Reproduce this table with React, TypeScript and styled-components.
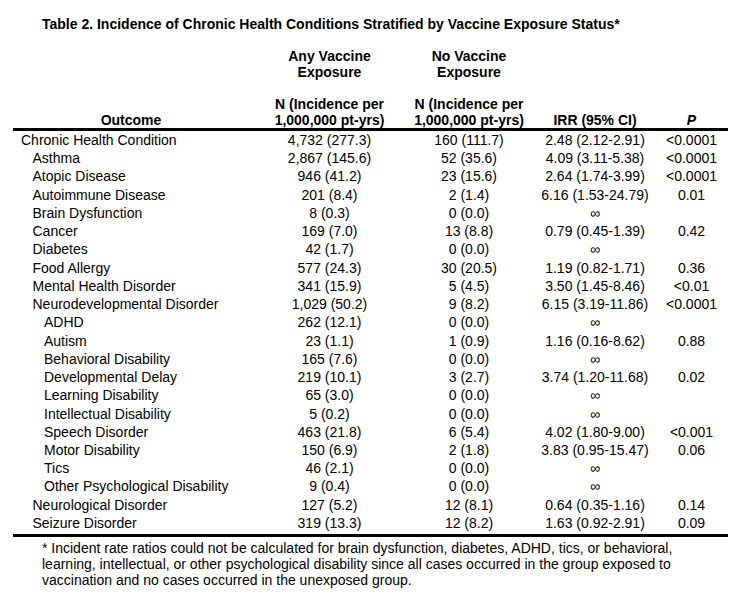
import React from "react";
import styled, { createGlobalStyle } from "styled-components";

const Global = createGlobalStyle`
  html, body { margin: 0; padding: 0; background: #fff; }
  body { font-family: "Liberation Sans", Arial, sans-serif; color: #000; }
`;

const Page = styled.div`
  width: 742px;
  padding: 16px 0 0 13px;
  box-sizing: border-box;
`;

const Title = styled.div`
  padding-left: 29px;
  font-size: 14px;
  font-weight: 700;
  line-height: 16px;
  margin-bottom: 16px;
`;

const Grid = styled.div`
  display: grid;
  grid-template-columns: 243px 154px 125px 127px 66px;
  width: 715px;
`;

const HeadGrid = styled(Grid)`
  border-bottom: 3px solid #000;
`;

const HeadCell = styled.div<{ $italic?: boolean }>`
  align-self: end;
  text-align: center;
  padding-right: 7px;
  font-size: 14px;
  font-weight: 700;
  line-height: 16px;
  font-style: ${(p) => (p.$italic ? "italic" : "normal")};
`;

const Spacer = styled.div`
  height: 16px;
`;

const BodyGrid = styled(Grid)`
  grid-auto-rows: 18.24px;
  padding-bottom: 2px;
  border-bottom: 3px solid #000;
`;

const OutcomeCell = styled.div<{ $level: number }>`
  padding-left: ${(p) => 8 + p.$level * 11.5}px;
  font-size: 14px;
  line-height: 18.6px;
  white-space: nowrap;
`;

const NumCell = styled.div`
  text-align: center;
  padding-right: 7px;
  font-size: 14px;
  line-height: 18.6px;
  white-space: nowrap;
`;

const Footnote = styled.div`
  padding: 3px 0 0 29px;
  font-size: 14px;
  line-height: 16px;
`;

type Row = [number, string, string, string, string, string];

const rows: Row[] = [
  [0, "Chronic Health Condition", "4,732 (277.3)", "160 (111.7)", "2.48 (2.12-2.91)", "<0.0001"],
  [1, "Asthma", "2,867 (145.6)", "52 (35.6)", "4.09 (3.11-5.38)", "<0.0001"],
  [1, "Atopic Disease", "946 (41.2)", "23 (15.6)", "2.64 (1.74-3.99)", "<0.0001"],
  [1, "Autoimmune Disease", "201 (8.4)", "2 (1.4)", "6.16 (1.53-24.79)", "0.01"],
  [1, "Brain Dysfunction", "8 (0.3)", "0 (0.0)", "∞", ""],
  [1, "Cancer", "169 (7.0)", "13 (8.8)", "0.79 (0.45-1.39)", "0.42"],
  [1, "Diabetes", "42 (1.7)", "0 (0.0)", "∞", ""],
  [1, "Food Allergy", "577 (24.3)", "30 (20.5)", "1.19 (0.82-1.71)", "0.36"],
  [1, "Mental Health Disorder", "341 (15.9)", "5 (4.5)", "3.50 (1.45-8.46)", "<0.01"],
  [1, "Neurodevelopmental Disorder", "1,029 (50.2)", "9 (8.2)", "6.15 (3.19-11.86)", "<0.0001"],
  [2, "ADHD", "262 (12.1)", "0 (0.0)", "∞", ""],
  [2, "Autism", "23 (1.1)", "1 (0.9)", "1.16 (0.16-8.62)", "0.88"],
  [2, "Behavioral Disability", "165 (7.6)", "0 (0.0)", "∞", ""],
  [2, "Developmental Delay", "219 (10.1)", "3 (2.7)", "3.74 (1.20-11.68)", "0.02"],
  [2, "Learning Disability", "65 (3.0)", "0 (0.0)", "∞", ""],
  [2, "Intellectual Disability", "5 (0.2)", "0 (0.0)", "∞", ""],
  [2, "Speech Disorder", "463 (21.8)", "6 (5.4)", "4.02 (1.80-9.00)", "<0.001"],
  [2, "Motor Disability", "150 (6.9)", "2 (1.8)", "3.83 (0.95-15.47)", "0.06"],
  [2, "Tics", "46 (2.1)", "0 (0.0)", "∞", ""],
  [2, "Other Psychological Disability", "9 (0.4)", "0 (0.0)", "∞", ""],
  [1, "Neurological Disorder", "127 (5.2)", "12 (8.1)", "0.64 (0.35-1.16)", "0.14"],
  [1, "Seizure Disorder", "319 (13.3)", "12 (8.2)", "1.63 (0.92-2.91)", "0.09"],
];

export default function App() {
  return (
    <Page>
      <Global />
      <Title>
        Table 2. Incidence of Chronic Health Conditions Stratified by Vaccine Exposure Status*
      </Title>
      <HeadGrid>
        <HeadCell>Outcome</HeadCell>
        <HeadCell>
          Any Vaccine
          <br />
          Exposure
          <Spacer />
          N (Incidence per
          <br />
          1,000,000 pt-yrs)
        </HeadCell>
        <HeadCell>
          No Vaccine
          <br />
          Exposure
          <Spacer />
          N (Incidence per
          <br />
          1,000,000 pt-yrs)
        </HeadCell>
        <HeadCell>IRR (95% CI)</HeadCell>
        <HeadCell $italic>P</HeadCell>
      </HeadGrid>
      <BodyGrid>
        {rows.map(([level, name, any, none, irr, p]) => (
          <React.Fragment key={name}>
            <OutcomeCell $level={level}>{name}</OutcomeCell>
            <NumCell>{any}</NumCell>
            <NumCell>{none}</NumCell>
            <NumCell>{irr}</NumCell>
            <NumCell>{p}</NumCell>
          </React.Fragment>
        ))}
      </BodyGrid>
      <Footnote>
        * Incident rate ratios could not be calculated for brain dysfunction, diabetes, ADHD, tics, or behavioral,
        <br />
        learning, intellectual, or other psychological disability since all cases occurred in the group exposed to
        <br />
        vaccination and no cases occurred in the unexposed group.
      </Footnote>
    </Page>
  );
}
